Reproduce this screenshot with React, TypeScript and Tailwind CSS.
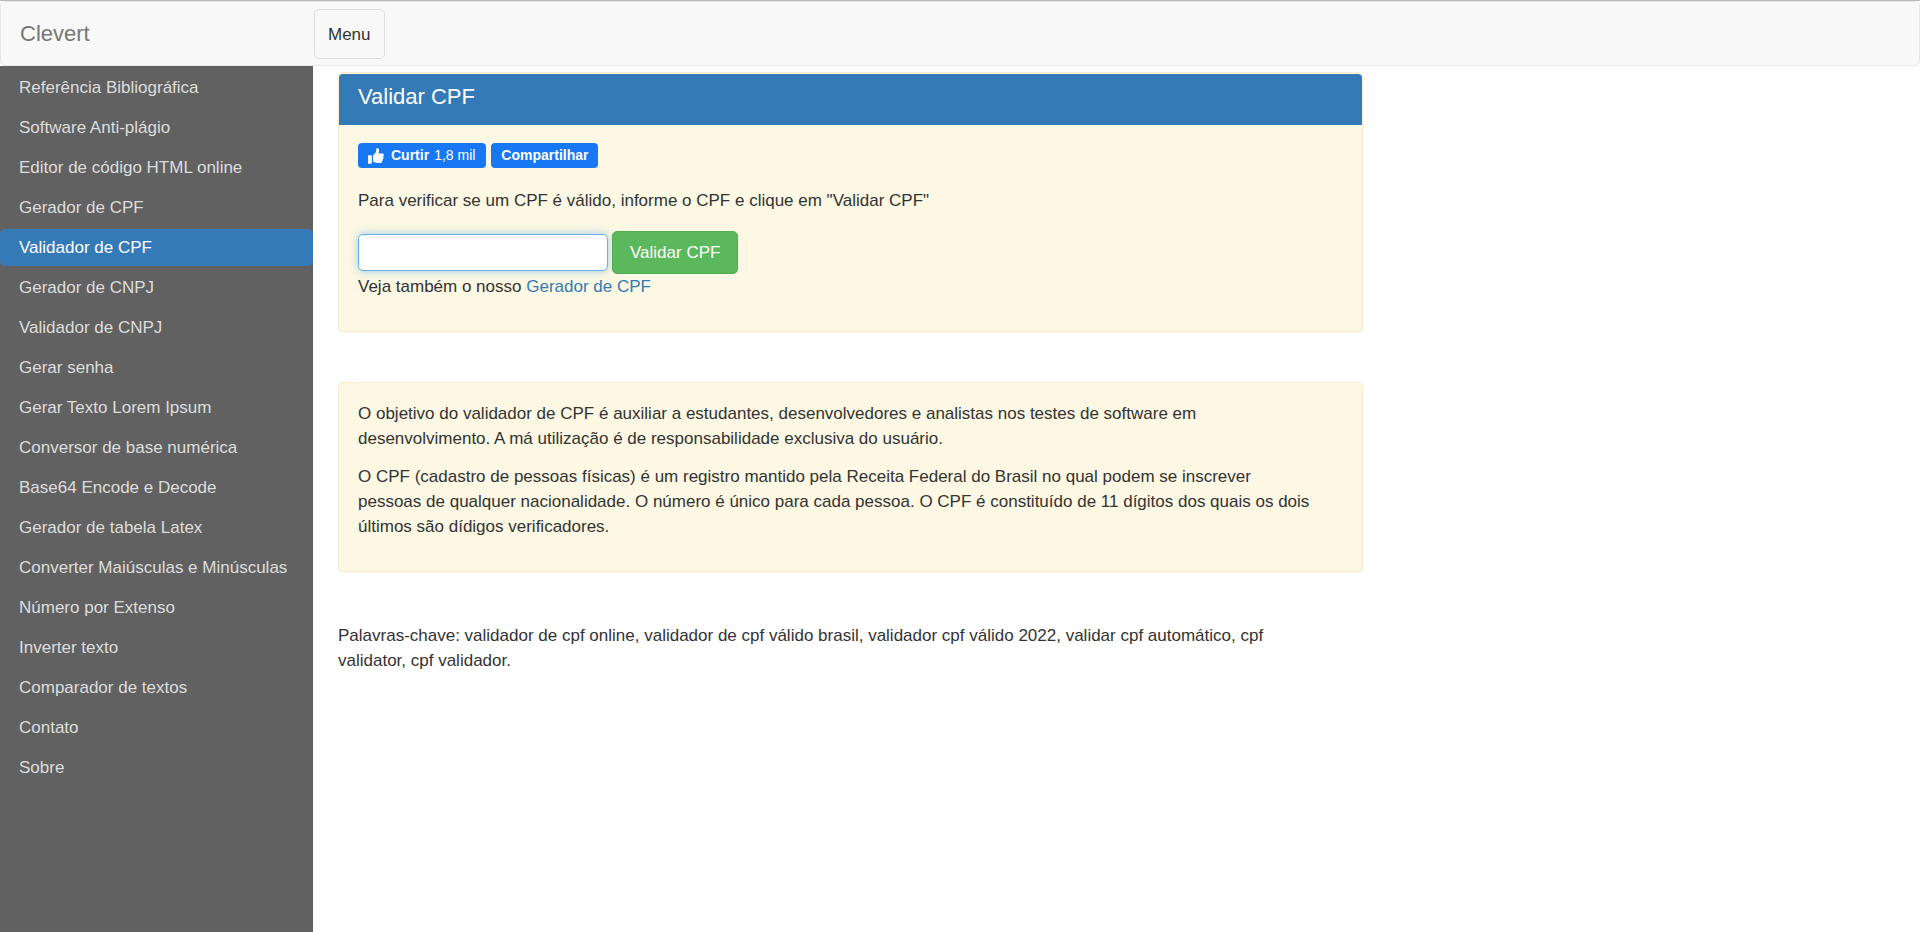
const items: string[] = [
  "Referência Bibliográfica",
  "Software Anti-plágio",
  "Editor de código HTML online",
  "Gerador de CPF",
  "Validador de CPF",
  "Gerador de CNPJ",
  "Validador de CNPJ",
  "Gerar senha",
  "Gerar Texto Lorem Ipsum",
  "Conversor de base numérica",
  "Base64 Encode e Decode",
  "Gerador de tabela Latex",
  "Converter Maiúsculas e Minúsculas",
  "Número por Extenso",
  "Inverter texto",
  "Comparador de textos",
  "Contato",
  "Sobre",
];

const activeItem = "Validador de CPF";

function Navbar() {
  return (
    <header className="flex items-center rounded-[5px] border border-[#e7e7e7] bg-[#f8f8f8] pt-[7px] pb-1.5">
      <div className="w-[313px] shrink-0 pl-[19px]">
        <a href="#" className="text-[22px] leading-7 text-[#777]">Clevert</a>
      </div>
      <button type="button" className="h-[50px] rounded-[5px] border border-[#ddd] px-[13px] text-[#333]">
        Menu
      </button>
    </header>
  );
}

function Sidebar() {
  return (
    <nav className="w-[313px] shrink-0 bg-[#616161] pt-[3px]">
      <ul className="flex flex-col gap-[3px]">
        {items.map((item) => (
          <li key={item}>
            <a
              href="#"
              aria-current={item === activeItem ? "page" : undefined}
              className={
                item === activeItem
                  ? "block rounded-[5px] bg-[#337ab7] px-[19px] py-1.5 text-white"
                  : "block rounded-[5px] px-[19px] py-1.5 text-[#ddd]"
              }
            >
              {item}
            </a>
          </li>
        ))}
      </ul>
    </nav>
  );
}

function ThumbIcon() {
  return (
    <svg viewBox="0 0 16 16" className="size-4" fill="currentColor" aria-hidden="true">
      <path d="M0.6 7.2h2.6c.3 0 .6.3.6.6v7.4c0 .3-.3.6-.6.6H.6c-.3 0-.6-.3-.6-.6V7.8c0-.3.3-.6.6-.6z" />
      <path d="M5 8.2c0-.5.1-.8.4-1.2l2.3-2.6c.3-.4.5-.8.5-1.3V1.2C8.2.5 8.7.2 9.200.2c1.200 0 1.900.9 1.900 2.200 0 1.200-.4 2.200-.8 3.200h4c.9 0 1.600.7 1.600 1.500 0 .6-.3 1-.8 1.300.3.300.5.700.5 1.100 0 .7-.4 1.200-1 1.400.2.300.3.500.3.900 0 .7-.5 1.200-1.100 1.400.1.200.1.300.1.500 0 .8-.7 1.300-1.500 1.300H9.400c-1.200 0-2-.2-2.900-.7L5 13.600z" />
    </svg>
  );
}

function SocialButtons() {
  return (
    <div className="flex gap-[5px] text-sm leading-[25px] text-white">
      <button type="button" className="flex items-center rounded bg-[#1877f2] pr-[11px] pl-2.5">
        <ThumbIcon />
        <span className="ml-[7px] font-bold">Curtir</span>
        <span className="ml-[5px]">1,8 mil</span>
      </button>
      <button type="button" className="rounded bg-[#1877f2] px-2.5 font-bold">
        Compartilhar
      </button>
    </div>
  );
}

function ValidatorPanel() {
  return (
    <section className="rounded-[5px] border border-[#faebcc] bg-[#fcf8e3] pt-px shadow-xs">
      <h1 className="h-[51px] rounded-t-[4px] bg-[#337ab7] px-[19px] pt-2 text-[22px] leading-[30px] text-white">
        Validar CPF
      </h1>
      <div className="px-[19px] pt-[18px] pb-5">
        <SocialButtons />
        <p className="mt-5">
          <label htmlFor="cpf">Para verificar se um CPF é válido, informe o CPF e clique em "Validar CPF"</label>
        </p>
        <form className="mt-[18px] flex items-center gap-1" onSubmit={(e) => e.preventDefault()}>
          <input
            id="cpf"
            type="text"
            className="h-[37px] w-[250px] rounded-[5px] border border-[#66afe9] bg-white px-2 shadow-[0_0_10px_rgba(102,175,233,0.6)] outline-none"
          />
          <button
            type="submit"
            className="h-[43px] rounded-[5px] border border-[#4cae4c] bg-[#5cb85c] px-[17px] text-white"
          >
            Validar CPF
          </button>
        </form>
        <p className="mb-3">
          Veja também o nosso{" "}
          <a href="#" className="text-[#337ab7]">Gerador de CPF</a>
        </p>
      </div>
    </section>
  );
}

function AboutPanel() {
  return (
    <section className="mt-[50px] flex flex-col gap-[13px] rounded-[5px] border border-[#faebcc] bg-[#fcf8e3] px-[19px] pt-[18px] pb-8 shadow-xs">
      <p>
        O objetivo do validador de CPF é auxiliar a estudantes, desenvolvedores e analistas nos testes de software em
        <br />
        desenvolvimento. A má utilização é de responsabilidade exclusiva do usuário.
      </p>
      <p>
        O CPF (cadastro de pessoas físicas) é um registro mantido pela Receita Federal do Brasil no qual podem se inscrever
        <br />
        pessoas de qualquer nacionalidade. O número é único para cada pessoa. O CPF é constituído de 11 dígitos dos quais os dois
        <br />
        últimos são dídigos verificadores.
      </p>
    </section>
  );
}

export default function App() {
  return (
    <div className="flex min-h-screen flex-col border-t border-[#b9b9b9] bg-white font-['Liberation_Sans',Arial,sans-serif] text-[17px] leading-[25px] text-[#333]">
      <Navbar />
      <div className="flex grow">
        <Sidebar />
        <main className="grid grow grid-cols-12 content-start gap-x-[38px] px-[25px] pt-1.5">
          <div className="col-span-8">
            <ValidatorPanel />
            <AboutPanel />
            <p className="mt-[51px]">
              Palavras-chave: validador de cpf online, validador de cpf válido brasil, validador cpf válido 2022, validar cpf automático, cpf
              <br />
              validator, cpf validador.
            </p>
          </div>
        </main>
      </div>
    </div>
  );
}
